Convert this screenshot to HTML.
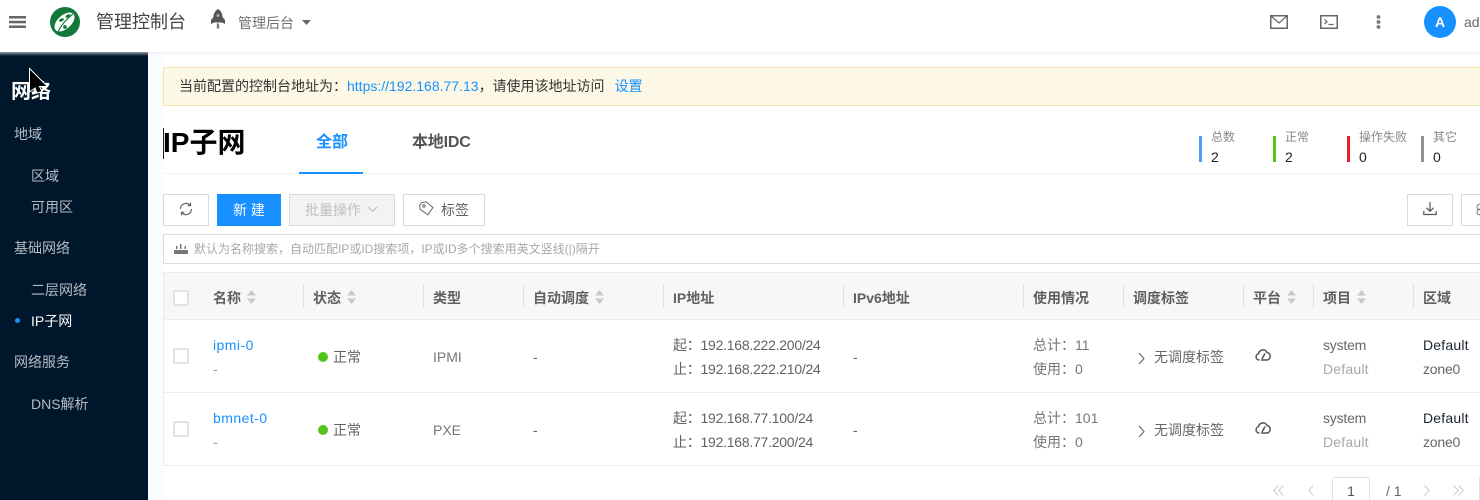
<!DOCTYPE html>
<html lang="zh"><head><meta charset="utf-8"><title>IP子网</title>
<style>
html,body{margin:0;padding:0;width:1480px;height:500px;overflow:hidden;background:#fff}
body{position:relative;font-family:"Liberation Sans","Noto Sans CJK SC",sans-serif;font-size:14px;color:#606266}
.a{position:absolute;white-space:nowrap;line-height:20px}
.r{position:absolute}
.h{font-weight:700;color:#5f5f5f;top:288px}
.sep{position:absolute;top:284px;width:1px;height:24px;background:#e0e0e0}
.nav{color:#b4bcc4}
.cb{position:absolute;left:173px;width:12px;height:12px;border:2px solid #dfe2e8;border-radius:2px;background:#fff}
.btn{position:absolute;top:194px;height:32px;box-sizing:border-box;border:1px solid #d9d9d9;background:#fff;border-radius:1px}
.blue{color:#1890ff}
.t{letter-spacing:-.25px}
.n{letter-spacing:.45px}
svg{position:absolute;overflow:visible}
.sort{position:absolute;width:9px;height:14px}
</style></head><body>

<!-- header -->
<div class="r" style="left:0;top:0;width:1480px;height:52px;background:#fff;box-shadow:0 1px 4px rgba(0,0,0,.08);z-index:3"></div>
<div style="position:absolute;left:0;top:0;width:1480px;height:52px;z-index:4">
<svg style="left:9px;top:16px" width="17" height="12" fill="#666"><rect width="17" height="2.500"/><rect y="4.800" width="17" height="2.500"/><rect y="9.500" width="17" height="2.500"/></svg>
<svg style="left:50px;top:7px" width="30" height="30" viewBox="0 0 30 30"><circle cx="15" cy="15" r="15" fill="#13793b"/><ellipse cx="14.500" cy="15" rx="12" ry="6.800" transform="rotate(-42 14.500 15)" fill="#fff"/><path d="M7 27C10 20 15 13 23 7" stroke="#13793b" stroke-width="1.100" fill="none"/><ellipse cx="11.500" cy="13" rx="2.600" ry="1.500" transform="rotate(-25 11.500 13)" fill="#13793b"/><ellipse cx="18" cy="9" rx="2.600" ry="1.500" transform="rotate(-25 18 9)" fill="#13793b"/><circle cx="15" cy="20" r="1.900" fill="#13793b"/></svg>
<div class="a" style="left:96px;top:10px;font-size:18px;color:#444;line-height:24px">管理控制台</div>
<svg style="left:211px;top:9px" width="15" height="20" viewBox="0 0 15 20"><path d="M7 0C10.500 2 11.500 5.500 11.500 8L14 11V15L11 13.500H3L0 15V11L2.500 8C2.500 5.500 3.500 2 7 0Z" fill="#555"/><circle cx="7" cy="6.500" r="1.500" fill="#fff" opacity=".5"/><path d="M5.800 14.500h2.400v5h-2.400z" fill="#777"/></svg>
<div class="a" style="left:238px;top:13px;color:#707070">管理后台</div>
<svg style="left:302px;top:20px" width="9" height="6"><path d="M0 0H9L4.500 5Z" fill="#666"/></svg>
<svg style="left:1270px;top:15px" width="18" height="14" fill="none" stroke="#666"><path d="M.75.75h16.500v12.500H.75z" stroke-width="1.500"/><path d="M1 1l8 7 8-7" stroke-width="1.200"/></svg>
<svg style="left:1320px;top:15px" width="18" height="14" fill="none" stroke="#666"><path d="M.75.75h16.500v12.500H.75z" stroke-width="1.500"/><path d="M4.500 4.500l2.500 2.200-2.500 2.200M8.500 9.500h5" stroke-width="1.200"/></svg>
<svg style="left:1376px;top:15px" width="5" height="14" fill="#777"><circle cx="2.500" cy="2" r="1.900"/><circle cx="2.500" cy="7" r="1.900"/><circle cx="2.500" cy="12" r="1.900"/></svg>
<div class="r" style="left:1424px;top:6px;width:32px;height:32px;border-radius:50%;background:#1890ff;color:#fff;text-align:center;line-height:32px;font-size:14px;font-weight:700">A</div>
<div class="a" style="left:1464px;top:12px;color:#666">ad</div>
</div>

<!-- sidebar -->
<div class="r" style="left:0;top:52px;width:148px;height:448px;background:#00162b"></div>
<div class="r" style="left:0;top:52px;width:148px;height:4px;background:linear-gradient(#9aa0a6,#00162b)"></div>
<div class="a" style="left:11px;top:81px;color:#fff;font-size:20px;font-weight:700;line-height:22px">网络</div>
<svg style="left:29px;top:68px;z-index:5" width="20" height="30"><path d="M.5.500V24L6 20L8 25L13 23.500L10.500 18.500L18.500 18.500Z" fill="#000" stroke="#fff" stroke-width="1"/></svg>
<div class="a nav" style="left:14px;top:124px">地域</div>
<div class="a nav" style="left:31px;top:166px">区域</div>
<div class="a nav" style="left:31px;top:197px">可用区</div>
<div class="a nav" style="left:14px;top:238px">基础网络</div>
<div class="a nav" style="left:31px;top:280px">二层网络</div>
<div class="r" style="left:15px;top:318px;width:5px;height:5px;border-radius:50%;background:#1890ff"></div>
<div class="a" style="left:31px;top:311px;color:#fff">IP子网</div>
<div class="a nav" style="left:14px;top:352px">网络服务</div>
<div class="a nav" style="left:31px;top:394px">DNS解析</div>

<!-- alert -->
<div class="r" style="left:148px;top:52px;width:15px;height:448px;background:#fbfcfe"></div>
<div class="r" style="left:163px;top:67px;width:1317px;height:39px;box-sizing:border-box;background:#fdf8e5;border:1px solid #f6e5a8;border-right:0"></div>
<div class="a" style="left:179px;top:76px;color:#333">当前配置的控制台地址为：<span class="blue">https://192.168.77.13</span>，请使用该地址访问<span class="blue" style="margin-left:10px">设置</span></div>

<!-- title/tabs -->
<div class="r" style="left:163px;top:128px;width:1px;height:31px;background:#222"></div>
<div class="a" style="left:163px;top:127px;font-size:28px;font-weight:700;color:#000;line-height:32px">IP子网</div>
<div class="a" style="left:316px;top:132px;font-size:16px;font-weight:700;color:#1890ff;line-height:22px">全部</div>
<div class="a" style="left:412px;top:132px;font-size:16px;font-weight:700;color:#555;line-height:22px;letter-spacing:-.2px">本地IDC</div>
<div class="r" style="left:163px;top:173px;width:1317px;height:1px;background:#f0f0f0"></div>
<div class="r" style="left:299px;top:172px;width:64px;height:2px;background:#1890ff"></div>

<div class="r" style="left:1199px;top:136px;width:3px;height:26px;background:#4a9cf5"></div>
<div class="a" style="left:1211px;top:127px;font-size:12px;color:#888">总数</div>
<div class="a" style="left:1211px;top:147px;color:#222">2</div>
<div class="r" style="left:1273px;top:136px;width:3px;height:26px;background:#52c41a"></div>
<div class="a" style="left:1285px;top:127px;font-size:12px;color:#888">正常</div>
<div class="a" style="left:1285px;top:147px;color:#222">2</div>
<div class="r" style="left:1347px;top:136px;width:3px;height:26px;background:#e8222f"></div>
<div class="a" style="left:1359px;top:127px;font-size:12px;color:#888">操作失败</div>
<div class="a" style="left:1359px;top:147px;color:#222">0</div>
<div class="r" style="left:1421px;top:136px;width:3px;height:26px;background:#939393"></div>
<div class="a" style="left:1433px;top:127px;font-size:12px;color:#888">其它</div>
<div class="a" style="left:1433px;top:147px;color:#222">0</div>

<!-- toolbar -->
<div class="btn" style="left:163px;width:46px"></div>
<svg style="left:179px;top:202px" width="14" height="14" viewBox="0 0 14 14" fill="none" stroke="#666" stroke-width="1.200"><path d="M1.500 7A5.500 5.500 0 0 1 11 3.200M12.500 7A5.500 5.500 0 0 1 3 10.800"/><path d="M11.500 .8V3.700H8.700M2.500 13.200V10.300H5.300"/></svg>
<div class="r" style="left:217px;top:194px;width:64px;height:32px;background:#1890ff;color:#fff;text-align:center;line-height:32px">新 建</div>
<div class="btn" style="left:289px;width:106px;background:#f3f3f3"></div>
<div class="a" style="left:305px;top:200px;color:#bfbfbf">批量操作</div>
<svg style="left:367px;top:206px" width="11" height="7" fill="none" stroke="#bfbfbf" stroke-width="1.200"><path d="M1 1l4.500 4.500L10 1"/></svg>
<div class="btn" style="left:403px;width:82px"></div>
<svg style="left:419px;top:201px" width="15" height="15" viewBox="0 0 15 15" fill="none" stroke="#666"><path d="M1 3.500L3.500 1H8L14 7.500L8 14L1 7.500Z" transform="rotate(-8 7 7)"/><circle cx="5" cy="5" r="1.200"/></svg>
<div class="a" style="left:441px;top:200px">标签</div>

<div class="btn" style="left:1407px;width:46px"></div>
<svg style="left:1423px;top:201px" width="14" height="15" fill="none" stroke="#555" stroke-width="1.200"><path d="M7 1v9M3.500 6.800L7 10.300l3.500-3.500M.8 10v3.500h12.400V10"/></svg>
<div class="btn" style="left:1461px;width:30px"></div>
<svg style="left:1476px;top:203px" width="6" height="12" fill="none" stroke="#777"><circle cx="4" cy="4" r="3"/><circle cx="4" cy="9" r="3"/></svg>

<!-- search -->
<div class="r" style="left:163px;top:234px;width:1330px;height:30px;box-sizing:border-box;border:1px solid #dcdcdc;background:#fff"></div>
<svg style="left:174px;top:243px" width="14" height="11" fill="#777"><path d="M0 7h14v4H0zM2 3h1.500v3H2zM6 1h1.500v5H6zM10.500 3H12v3h-1.500z"/></svg>
<div class="a" style="left:194px;top:239px;font-size:12px;color:#a8a8a8">默认为名称搜索，自动匹配IP或ID搜索项，IP或ID多个搜索用英文竖线(|)隔开</div>

<!-- table -->
<div class="r" style="left:163px;top:272px;width:1330px;height:48px;box-sizing:border-box;background:#f7f7f7;border:1px solid #ececec;border-width:1px 0 1px 1px"></div>
<div class="r" style="left:163px;top:320px;width:1px;height:146px;background:#ececec"></div>
<div class="r" style="left:163px;top:392px;width:1317px;height:1px;background:#ececec"></div>
<div class="r" style="left:163px;top:465px;width:1317px;height:1px;background:#ececec"></div>
<div class="cb" style="top:290px"></div>
<div class="cb" style="top:348px"></div>
<div class="cb" style="top:421px"></div>

<div class="sep" style="left:303px"></div><div class="sep" style="left:423px"></div><div class="sep" style="left:523px"></div><div class="sep" style="left:663px"></div><div class="sep" style="left:843px"></div><div class="sep" style="left:1023px"></div><div class="sep" style="left:1123px"></div><div class="sep" style="left:1243px"></div><div class="sep" style="left:1313px"></div><div class="sep" style="left:1413px"></div>

<div class="a h" style="left:213px">名称</div>
<svg class="sort" style="left:247px;top:290px" fill="#c5cad3"><path d="M4.500 0L9 5.500H0zM4.500 14L0 8.500h9z"/></svg>
<div class="a h" style="left:313px">状态</div>
<svg class="sort" style="left:347px;top:290px" fill="#c5cad3"><path d="M4.500 0L9 5.500H0zM4.500 14L0 8.500h9z"/></svg>
<div class="a h" style="left:433px">类型</div>
<div class="a h" style="left:533px">自动调度</div>
<svg class="sort" style="left:595px;top:290px" fill="#c5cad3"><path d="M4.500 0L9 5.500H0zM4.500 14L0 8.500h9z"/></svg>
<div class="a h" style="left:673px">IP地址</div>
<div class="a h" style="left:853px">IPv6地址</div>
<div class="a h" style="left:1033px">使用情况</div>
<div class="a h" style="left:1133px">调度标签</div>
<div class="a h" style="left:1253px">平台</div>
<svg class="sort" style="left:1287px;top:290px" fill="#c5cad3"><path d="M4.500 0L9 5.500H0zM4.500 14L0 8.500h9z"/></svg>
<div class="a h" style="left:1323px">项目</div>
<svg class="sort" style="left:1357px;top:290px" fill="#c5cad3"><path d="M4.500 0L9 5.500H0zM4.500 14L0 8.500h9z"/></svg>
<div class="a h" style="left:1423px">区域</div>

<!-- row 1 -->
<div class="a blue n" style="left:213px;top:335px">ipmi-0</div>
<div class="a" style="left:213px;top:359px;color:#999">-</div>
<div class="r" style="left:318px;top:352px;width:10px;height:10px;border-radius:50%;background:#52c41a"></div>
<div class="a" style="left:333px;top:347px">正常</div>
<div class="a" style="left:433px;top:347px;color:#777">IPMI</div>
<div class="a" style="left:533px;top:347px">-</div>
<div class="a t" style="left:673px;top:335px">起：192.168.222.200/24</div>
<div class="a t" style="left:673px;top:359px">止：192.168.222.210/24</div>
<div class="a" style="left:853px;top:347px">-</div>
<div class="a" style="left:1033px;top:335px;color:#777">总计：11</div>
<div class="a" style="left:1033px;top:359px;color:#777">使用：0</div>
<svg style="left:1138px;top:352px" width="7" height="13" fill="none" stroke="#666" stroke-width="1.100"><path d="M1 1l5 5.500L1 12"/></svg>
<div class="a" style="left:1154px;top:347px;color:#666">无调度标签</div>
<svg style="left:1255px;top:348px" width="16" height="13" viewBox="0 0 16 13" fill="none" stroke="#555" stroke-width="1.500"><path d="M4.500 12H4A3.200 3.200 0 0 1 3.500 5.700A4.500 4.500 0 0 1 12 4.500A3.800 3.800 0 0 1 12 12H6"/><path d="M10 5.500L7 11"/></svg>
<div class="a" style="left:1323px;top:335px;color:#666;letter-spacing:-.2px">system</div>
<div class="a" style="left:1323px;top:359px;color:#a8a8a8;letter-spacing:.2px">Default</div>
<div class="a" style="left:1423px;top:335px;color:#1c2433;letter-spacing:.2px">Default</div>
<div class="a" style="left:1423px;top:359px;color:#666;letter-spacing:-.2px">zone0</div>

<!-- row 2 -->
<div class="a blue n" style="left:213px;top:408px">bmnet-0</div>
<div class="a" style="left:213px;top:432px;color:#999">-</div>
<div class="r" style="left:318px;top:425px;width:10px;height:10px;border-radius:50%;background:#52c41a"></div>
<div class="a" style="left:333px;top:420px">正常</div>
<div class="a" style="left:433px;top:420px;color:#777">PXE</div>
<div class="a" style="left:533px;top:420px">-</div>
<div class="a t" style="left:673px;top:408px">起：192.168.77.100/24</div>
<div class="a t" style="left:673px;top:432px">止：192.168.77.200/24</div>
<div class="a" style="left:853px;top:420px">-</div>
<div class="a" style="left:1033px;top:408px;color:#777">总计：101</div>
<div class="a" style="left:1033px;top:432px;color:#777">使用：0</div>
<svg style="left:1138px;top:425px" width="7" height="13" fill="none" stroke="#666" stroke-width="1.100"><path d="M1 1l5 5.500L1 12"/></svg>
<div class="a" style="left:1154px;top:420px;color:#666">无调度标签</div>
<svg style="left:1255px;top:421px" width="16" height="13" viewBox="0 0 16 13" fill="none" stroke="#555" stroke-width="1.500"><path d="M4.500 12H4A3.200 3.200 0 0 1 3.500 5.700A4.500 4.500 0 0 1 12 4.500A3.800 3.800 0 0 1 12 12H6"/><path d="M10 5.500L7 11"/></svg>
<div class="a" style="left:1323px;top:408px;color:#666;letter-spacing:-.2px">system</div>
<div class="a" style="left:1323px;top:432px;color:#a8a8a8;letter-spacing:.2px">Default</div>
<div class="a" style="left:1423px;top:408px;color:#1c2433;letter-spacing:.2px">Default</div>
<div class="a" style="left:1423px;top:432px;color:#666;letter-spacing:-.2px">zone0</div>

<!-- pager -->
<svg style="left:1273px;top:485px" width="12" height="11" fill="none" stroke="#ccc" stroke-width="1"><path d="M5.500 .5L.7 5.500l4.800 5M10.500 .5L5.700 5.500l4.800 5"/></svg>
<svg style="left:1308px;top:485px" width="6" height="11" fill="none" stroke="#ccc"><path d="M5.500 .5L.7 5.500l4.800 5"/></svg>
<div class="r" style="left:1332px;top:477px;width:38px;height:30px;box-sizing:border-box;border:1px solid #dcdfe6;border-radius:3px;text-align:center;line-height:26px;color:#555">1</div>
<div class="a" style="left:1386px;top:481px;color:#666">/ 1</div>
<svg style="left:1424px;top:485px" width="6" height="11" fill="none" stroke="#ccc"><path d="M.5 .5l4.800 5-4.800 5"/></svg>
<svg style="left:1453px;top:485px" width="12" height="11" fill="none" stroke="#ccc"><path d="M.5 .5l4.800 5-4.800 5M5.500 .5l4.800 5-4.800 5"/></svg>
<div class="r" style="left:1479px;top:477px;width:1px;height:23px;background:#dcdfe6"></div>
</body></html>
